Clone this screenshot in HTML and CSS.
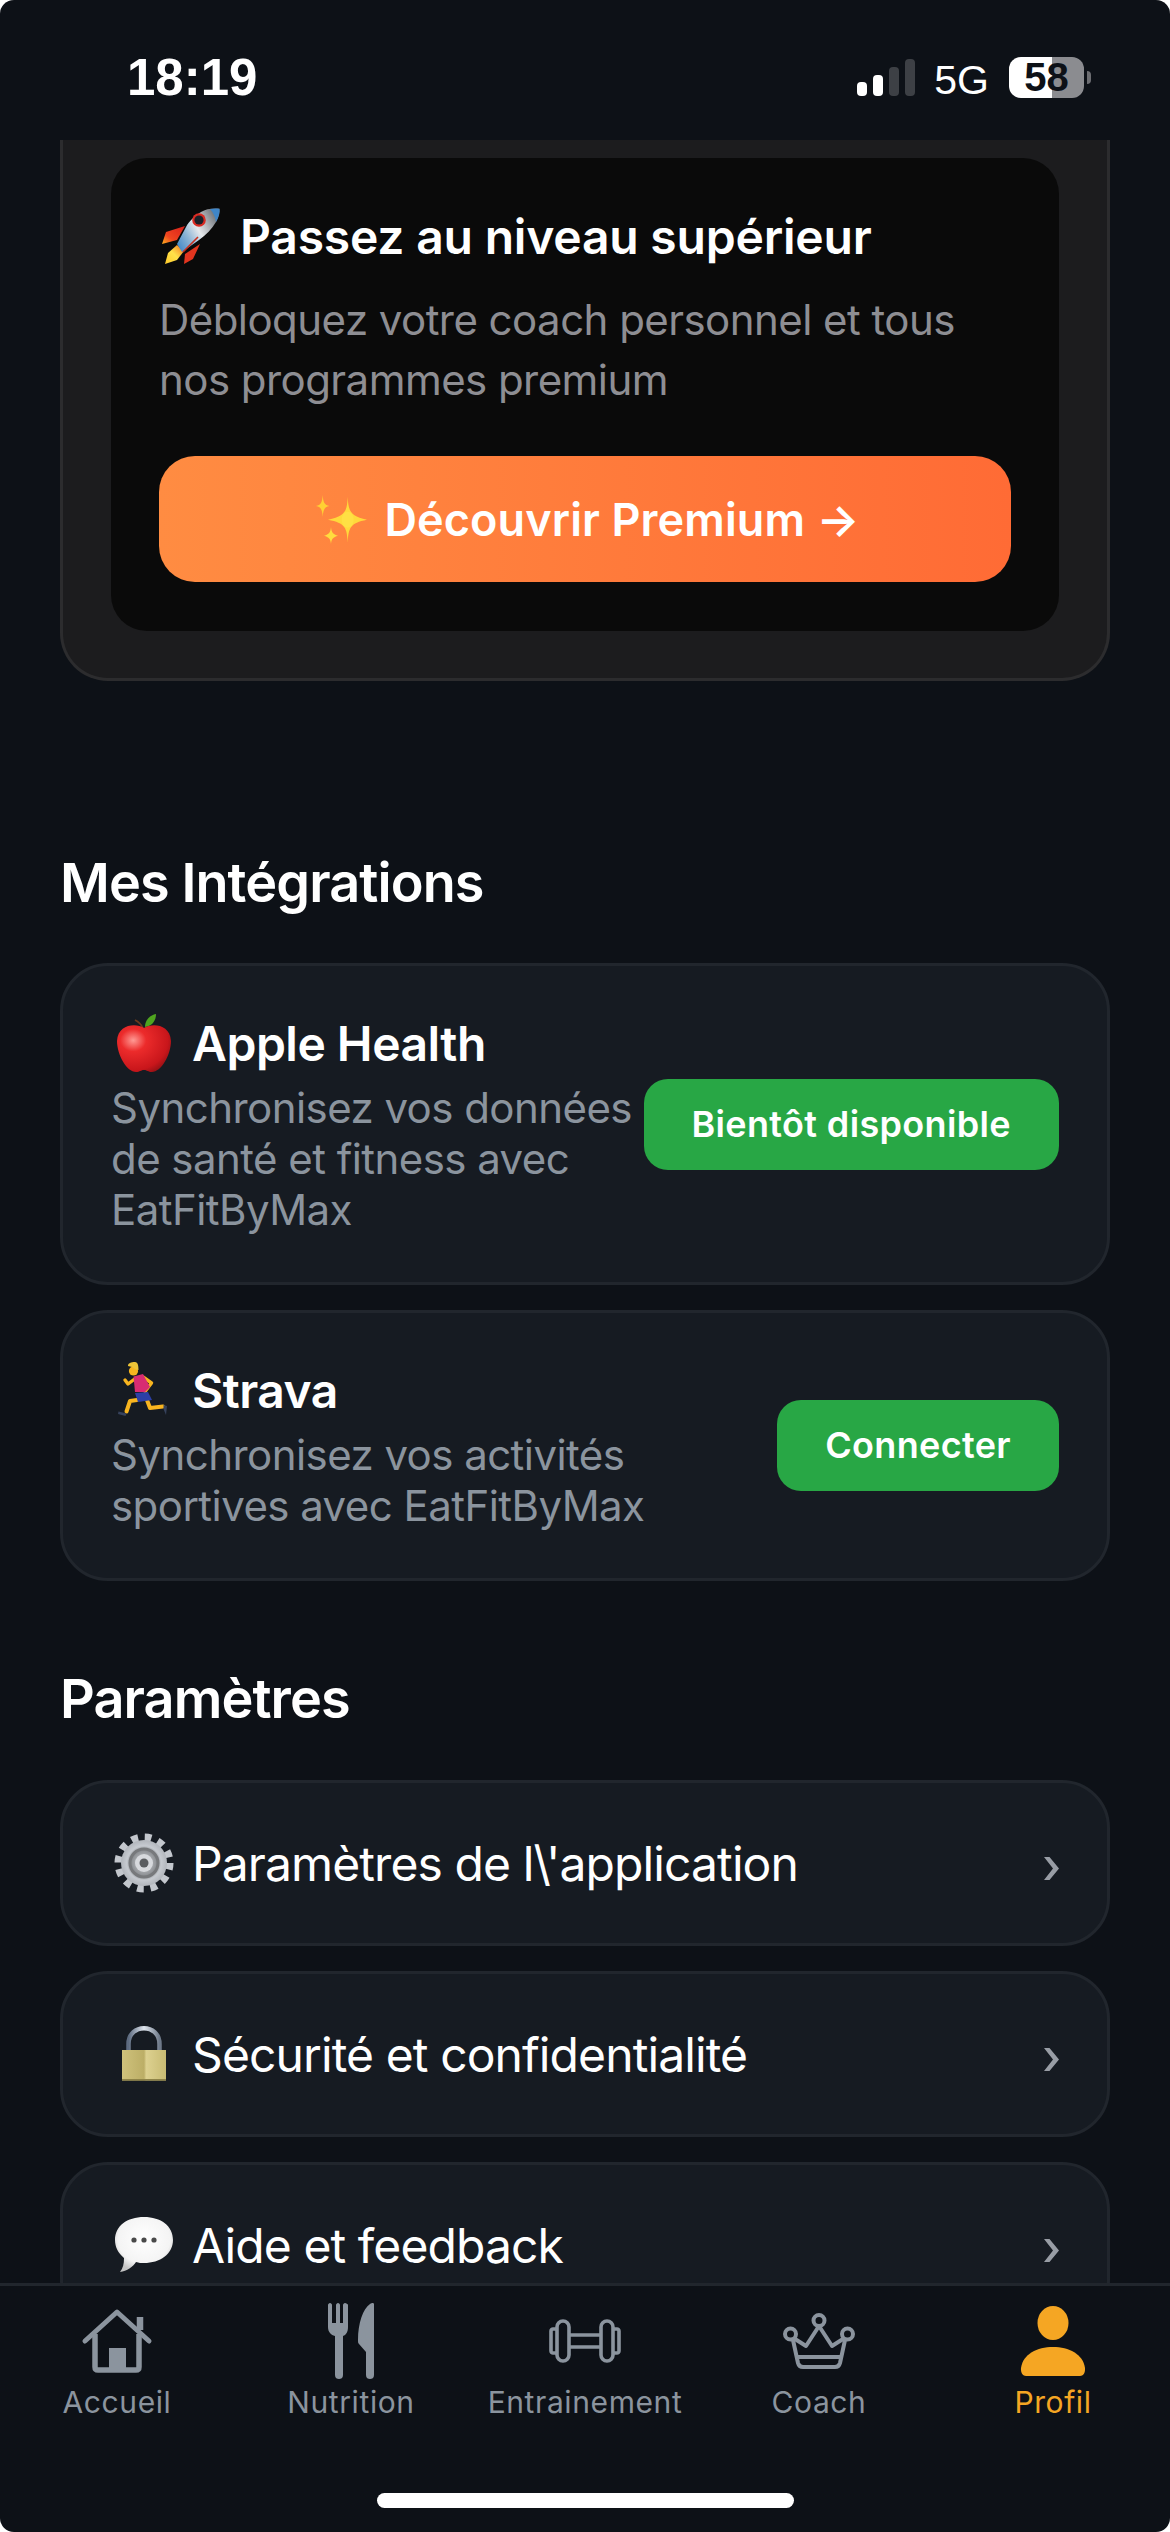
FILE: index.html
```html
<!DOCTYPE html>
<html lang="fr">
<head>
  <meta charset="UTF-8" />
  <title>Profil</title>
  <link rel="stylesheet" href="styles.css">
</head>
<body>
  <div class="phone">
    <div class="status-bar">
      <div class="time">18:19</div>
      <div class="status-right">
        <div class="signal">
          <span class="bar bar-1"></span>
          <span class="bar bar-2"></span>
          <span class="bar bar-3"></span>
          <span class="bar bar-4"></span>
        </div>
        <div class="network">5G</div>
        <div class="battery"><span class="battery-text">58</span></div>
        <div class="battery-cap"></div>
      </div>
    </div>

    <div class="content">
      <div class="premium-wrap">
        <div class="premium-card">
          <div class="premium-title">
            <svg class="emoji-rocket" viewBox="0 0 60 58">
              <defs>
                <linearGradient id="rocketBody" x1="0" y1="0.9" x2="1" y2="0.3">
                  <stop offset="0" stop-color="#3f86c8"/>
                  <stop offset="0.3" stop-color="#8fb6d6"/>
                  <stop offset="0.55" stop-color="#e6e9ec"/>
                  <stop offset="1" stop-color="#6f747a"/>
                </linearGradient>
                <linearGradient id="rocketFin" x1="1" y1="0" x2="0" y2="1">
                  <stop offset="0" stop-color="#d8201c"/>
                  <stop offset="0.65" stop-color="#f0451f"/>
                  <stop offset="1" stop-color="#ffb21e"/>
                </linearGradient>
                <linearGradient id="rocketFlame" x1="1" y1="0" x2="0" y2="1">
                  <stop offset="0" stop-color="#f26a1b"/>
                  <stop offset="0.5" stop-color="#ffe14a"/>
                  <stop offset="1" stop-color="#ffc928"/>
                </linearGradient>
              </defs>
              <path d="M23 19 L4 25 L0 37 L15 33 Z" fill="url(#rocketFin)"/>
              <path d="M38 37 L31 52 L22 57 L23 47 Z" fill="#e2351f"/>
              <path d="M15 38 L6 46 L3 57 L15 53 L22 44 Z" fill="url(#rocketFlame)"/>
              <path d="M57.500 1.700 C50 1 44 2 39 5 C33 9 27 14 24 20 L15 37 L20 45 L37 33 C44 28 50 22 54 15 C57 10 58 5 57.500 1.700 Z" fill="url(#rocketBody)"/>
              <path d="M57.500 1.700 C54 1.200 51 1.300 48 2 C51 5 53 9 54 15 C57 10 58 5 57.500 1.700 Z" fill="#3f86c8"/>
              <path d="M21 45 L36 30" fill="none" stroke="#c8301f" stroke-width="1.600"/>
              <circle cx="37" cy="13" r="6.800" fill="#d92a22"/>
              <circle cx="37" cy="13" r="4.600" fill="#1a2028"/>
            </svg>
            <span>Passez au niveau supérieur</span>
          </div>
          <div class="premium-text">Débloquez votre coach personnel et tous nos programmes premium</div>
          <div class="premium-button">
            <svg class="emoji-sparkles" viewBox="0 0 51 49">
              <path d="M31.700 2 C32.500 16 34 21 51 24.700 C34 28 32.500 33 31.700 47.700 C31 33 29.500 28 12 24.700 C29.500 21 31 16 31.700 2 Z" fill="#ffd93b"/>
              <ellipse cx="31.700" cy="24.700" rx="6" ry="8" fill="#ffe044"/>
              <path d="M6.700 0 C7.200 7.500 8.500 10 13.400 11 C8.500 12 7.200 14.500 6.700 22 C6.200 14.500 5 12 0 11 C5 10 6.200 7.500 6.700 0 Z" fill="#ffd033"/>
              <path d="M15 32 C15.500 37.500 17 39.500 22 40.700 C17 42 15.500 44 15 49 C14.500 44 13 42 8 40.700 C13 39.500 14.500 37.500 15 32 Z" fill="#ffdc3e"/>
            </svg>
            <span>Découvrir Premium →</span>
          </div>
        </div>
      </div>

      <h2 class="section-title title-integrations">Mes Intégrations</h2>

      <div class="card integration">
        <div class="integration-info">
          <div class="integration-name">
            <svg class="emoji" viewBox="0 0 60 60">
              <defs>
                <radialGradient id="appleRed" cx="0.3" cy="0.32" r="0.8">
                  <stop offset="0" stop-color="#ff9a94"/>
                  <stop offset="0.3" stop-color="#ec2b2b"/>
                  <stop offset="0.8" stop-color="#c9161b"/>
                  <stop offset="1" stop-color="#8f1014"/>
                </radialGradient>
              </defs>
              <path d="M29 15 C27 11 25 9 21 7" fill="none" stroke="#6b3a1d" stroke-width="1.600"/>
              <path d="M31 14 C31 7 36 2 42 1 C42 8 38 13 31 14 Z" fill="#4fa41f"/>
              <path d="M30 15 C38 10 56 11 57 28 C57 42 47 59 38 59 C34 59 33 57 30 57 C27 57 26 59 22 59 C13 59 3 42 3 28 C4 11 22 10 30 15 Z" fill="url(#appleRed)"/>
            </svg>
            <span>Apple Health</span>
          </div>
          <div class="integration-desc">Synchronisez vos données de santé et fitness avec EatFitByMax</div>
        </div>
        <div class="green-button">Bientôt disponible</div>
      </div>

      <div class="card integration">
        <div class="integration-info">
          <div class="integration-name">
            <svg class="emoji" viewBox="0 0 60 60">
              <path d="M22 18 L14 24 L11 20" fill="none" stroke="#f8b51f" stroke-width="3.400" stroke-linecap="round" stroke-linejoin="round"/>
              <path d="M29 17 L37.500 23 L31 31.500" fill="none" stroke="#f8b51f" stroke-width="3.400" stroke-linecap="round" stroke-linejoin="round"/>
              <path d="M23 40 L16 41 L12.500 51.500" fill="none" stroke="#f8b51f" stroke-width="4" stroke-linecap="round" stroke-linejoin="round"/>
              <path d="M33 40 L36 48 L49 46.500" fill="none" stroke="#f8b51f" stroke-width="4" stroke-linecap="round" stroke-linejoin="round"/>
              <path d="M19.500 16.500 L29 14 L36 27 L31 32 L21 32 Z" fill="#d82c72"/>
              <path d="M21 33 L34 32 L38 40 L24 42 Z" fill="#2b3fa6"/>
              <circle cx="19.500" cy="11" r="4.600" fill="#f8b51f"/>
              <path d="M14 6 C14 3 17 2 21 2 C24 2 24.500 6 24.500 10 C22 10 20 8 18 7 Z" fill="#eec537"/>
              <path d="M4.500 51.500 L12.500 53.500 L11.500 56 L4 54 Z" fill="#36425c"/>
              <path d="M49.500 45 L53 46 L52 55 L49.500 49 Z" fill="#36425c"/>
            </svg>
            <span>Strava</span>
          </div>
          <div class="integration-desc">Synchronisez vos activités sportives avec EatFitByMax</div>
        </div>
        <div class="green-button">Connecter</div>
      </div>

      <h2 class="section-title title-settings">Paramètres</h2>

      <div class="card settings-row">
        <svg class="emoji" viewBox="0 0 60 60">
          <defs>
            <radialGradient id="gearMetal" cx="0.5" cy="0.5" r="0.5">
              <stop offset="0" stop-color="#d5d8dc"/>
              <stop offset="0.55" stop-color="#8c8f93"/>
              <stop offset="0.75" stop-color="#c6cad0"/>
              <stop offset="1" stop-color="#b2b6bc"/>
            </radialGradient>
          </defs>
          <circle cx="30" cy="30" r="25" fill="none" stroke="#c3c7cd" stroke-width="9" stroke-dasharray="6.500 6.590"/>
          <circle cx="30" cy="30" r="23" fill="url(#gearMetal)"/>
          <circle cx="30" cy="30" r="14" fill="none" stroke="#77797c" stroke-width="3"/>
          <circle cx="30" cy="30" r="9" fill="#d7d9dd"/>
          <circle cx="30" cy="30" r="4.500" fill="#5b5d60"/>
        </svg>
        <span class="settings-label">Paramètres de l\'application</span>
        <svg class="chevron" viewBox="0 0 15 23">
          <path d="M0 0 L5.500 0 L15 11.500 L5.500 23 L0 23 L9 11.500 Z" fill="#989da5"/>
        </svg>
      </div>

      <div class="card settings-row">
        <svg class="emoji" viewBox="0 0 60 60">
          <defs>
            <linearGradient id="lockBody" x1="0" y1="0" x2="1" y2="0">
              <stop offset="0" stop-color="#cfc27c"/>
              <stop offset="0.5" stop-color="#bcae66"/>
              <stop offset="0.55" stop-color="#ddd190"/>
              <stop offset="1" stop-color="#c8bb73"/>
            </linearGradient>
            <linearGradient id="lockHook" x1="0" y1="0" x2="1" y2="0">
              <stop offset="0" stop-color="#5d6b80"/>
              <stop offset="0.5" stop-color="#dfe6ee"/>
              <stop offset="1" stop-color="#6f7a8a"/>
            </linearGradient>
          </defs>
          <path d="M14.500 28 L14.500 20 C14.500 -1 45.500 -1 45.500 20 L45.500 28" fill="none" stroke="url(#lockHook)" stroke-width="4.500"/>
          <path d="M8 26 L52 26 L52 56.500 L8 56.500 Z" fill="url(#lockBody)"/>
          <path d="M8 55 L52 55 L52 56.500 L8 56.500 Z" fill="#8f8448"/>
        </svg>
        <span class="settings-label">Sécurité et confidentialité</span>
        <svg class="chevron" viewBox="0 0 15 23">
          <path d="M0 0 L5.500 0 L15 11.500 L5.500 23 L0 23 L9 11.500 Z" fill="#989da5"/>
        </svg>
      </div>

      <div class="card settings-row">
        <svg class="emoji" viewBox="0 0 60 60">
          <defs>
            <radialGradient id="bubble" cx="0.5" cy="0.4" r="0.6">
              <stop offset="0" stop-color="#ffffff"/>
              <stop offset="0.75" stop-color="#f4f4f4"/>
              <stop offset="1" stop-color="#c4c4c4"/>
            </radialGradient>
          </defs>
          <path d="M30 2 C47 2 59 11 59 25 C59 39 46 48 30 48 C27 48 25 48 22 47 C19 52 13 56 6 57 C9 53 10 49 10 43 C4 38 1 32 1 25 C1 11 13 2 30 2 Z" fill="url(#bubble)"/>
          <circle cx="20" cy="25" r="2.600" fill="#4a4a4a"/>
          <circle cx="30" cy="25" r="2.600" fill="#4a4a4a"/>
          <circle cx="40" cy="25" r="2.600" fill="#4a4a4a"/>
        </svg>
        <span class="settings-label">Aide et feedback</span>
        <svg class="chevron" viewBox="0 0 15 23">
          <path d="M0 0 L5.500 0 L15 11.500 L5.500 23 L0 23 L9 11.500 Z" fill="#989da5"/>
        </svg>
      </div>
    </div>

    <div class="tab-bar">
      <div class="tab">
        <div class="tab-icon">
          <svg width="72" height="66" viewBox="0 0 72 66">
            <path d="M4 33 L36 4 L68 33" fill="none" stroke="#8b949e" stroke-width="5" stroke-linecap="round" stroke-linejoin="round"/>
            <path d="M59 22 L59 9" fill="none" stroke="#8b949e" stroke-width="6.500"/>
            <path d="M14 26 L14 59 C14 61 15 62 17 62 L55 62 C57 62 58 61 58 59 L58 26" fill="none" stroke="#8b949e" stroke-width="5.500"/>
            <rect x="28" y="40" width="17" height="22" fill="#8b949e"/>
          </svg>
        </div>
        <div class="tab-label">Accueil</div>
      </div>
      <div class="tab">
        <div class="tab-icon">
          <svg width="46" height="76" viewBox="0 0 46 76">
            <path d="M2 0 C3 0 4 1 4 2 L4 20 L8 20 L8 2 C8 1 9 0 10 0 C11 0 12 1 12 2 L12 20 L15 20 L15 2 C15 1 16 0 17 0 C18 0 20 1 20 2 L20 24 C20 29 18 32 15 33 L15 72 C15 75 13 76 11 76 C9 76 7 75 7 72 L7 33 C3 32 0 29 0 24 L0 2 C0 1 1 0 2 0 Z" fill="#8b949e"/>
            <path d="M45 0 C46 0 46 1 46 2 L46 72 C46 75 44 76 42 76 C40 76 38 75 38 72 L38 49 L31 41 C30 40 30 39 30 37 C30 20 35 6 42 1 C43 0 44 0 45 0 Z" fill="#8b949e"/>
          </svg>
        </div>
        <div class="tab-label">Nutrition</div>
      </div>
      <div class="tab">
        <div class="tab-icon">
          <svg width="72" height="44" viewBox="0 0 72 44">
            <g fill="none" stroke="#8b949e" stroke-width="3.600" stroke-linejoin="round">
              <path d="M8 10 L4 10 C3 10 2 11 2 12 L2 32 C2 33 3 34 4 34 L8 34"/>
              <rect x="8" y="2" width="12" height="40" rx="6"/>
              <path d="M20 16 L52 16 M20 28 L52 28"/>
              <rect x="52" y="2" width="12" height="40" rx="6"/>
              <path d="M64 10 L68 10 C69 10 70 11 70 12 L70 32 C70 33 69 34 68 34 L64 34"/>
            </g>
          </svg>
        </div>
        <div class="tab-label">Entrainement</div>
      </div>
      <div class="tab">
        <div class="tab-icon">
          <svg width="72" height="56" viewBox="0 0 72 56">
            <g fill="none" stroke="#8b949e" stroke-width="4" stroke-linejoin="round" stroke-linecap="round">
              <circle cx="7.500" cy="21" r="5.500"/>
              <circle cx="36" cy="7.500" r="5.500"/>
              <circle cx="64.500" cy="21" r="5.500"/>
              <path d="M10 27 L15 50 C15.500 52 17 54 20 54 L52 54 C55 54 56.500 52 57 50 L62 27"/>
              <path d="M12 26 L23 33 L36 13 L49 33 L60 26"/>
              <path d="M14 44 L58 44"/>
            </g>
          </svg>
        </div>
        <div class="tab-label">Coach</div>
      </div>
      <div class="tab tab-active">
        <div class="tab-icon">
          <svg width="66" height="70" viewBox="0 0 66 70">
            <ellipse cx="33" cy="17" rx="15.500" ry="17" fill="#f5a623"/>
            <path d="M1 62 C3 48 17 41 33 41 C49 41 63 48 65 62 C65.500 67 63 70 60 70 L6 70 C3 70 0.500 67 1 62 Z" fill="#f5a623"/>
          </svg>
        </div>
        <div class="tab-label">Profil</div>
      </div>
    </div>

    <div class="home-area">
      <div class="home-indicator"></div>
    </div>
  </div>
</body>
</html>
```

FILE: styles.css
```css
:root {
  --bg: #0d1117;
  --card: #161b22;
  --border: #21262d;
  --muted: #8b949e;
  --orange: #f5a623;
  --green: #28a745;
}

* {
  box-sizing: border-box;
}

html, body {
  margin: 0;
  background: #fff;
}

body {
  font-family: 'Inter', 'Liberation Sans', sans-serif;
  color: #fff;
}

.phone {
  width: 1170px;
  height: 2532px;
  background: var(--bg);
  border-radius: 14px;
  overflow: hidden;
  display: flex;
  flex-direction: column;
}

/* status bar */
.status-bar {
  height: 140px;
  flex-shrink: 0;
  display: flex;
  justify-content: space-between;
  align-items: flex-start;
  padding: 52px 79px 0 127px;
}

.time {
  font-family: 'Liberation Sans', sans-serif;
  font-size: 51px;
  line-height: 52px;
  font-weight: 700;
}

.status-right {
  display: flex;
  align-items: center;
  height: 44px;
  margin-top: 3px;
}

.signal {
  display: flex;
  align-items: flex-end;
  gap: 6px;
  height: 38px;
  margin-right: 19px;
}

.bar {
  width: 10px;
  border-radius: 4px;
  background: #fff;
}

.bar-1 { height: 14px; }
.bar-2 { height: 21px; }
.bar-3 { height: 29px; background: #3d4045; }
.bar-4 { height: 37px; background: #3d4045; }

.network {
  font-family: 'Liberation Sans', sans-serif;
  font-size: 41px;
  line-height: 44px;
  margin-top: 5px;
  margin-right: 20px;
}

.battery {
  width: 75px;
  height: 41px;
  border-radius: 12px;
  background: linear-gradient(90deg, #fff 0, #fff 57%, #8b8c90 57%, #8b8c90 100%);
  display: flex;
  align-items: center;
  justify-content: center;
}

.battery-text {
  font-family: 'Liberation Sans', sans-serif;
  font-size: 40px;
  font-weight: 700;
  color: #0d1117;
}

.battery-cap {
  width: 4px;
  height: 13px;
  margin-left: 3px;
  border-radius: 0 6px 6px 0;
  background: #6d6e72;
}

/* scrolling part */
.content {
  flex: 1;
  min-height: 0;
  overflow: hidden;
  padding: 0 60px;
}

.premium-wrap {
  height: 541px;
  padding: 18px 48px 0;
  background: #1c1c1e;
  border: 3px solid #2c2c2e;
  border-top: 0;
  border-radius: 0 0 48px 48px;
}

.premium-card {
  height: 473px;
  padding: 48px;
  background: #0a0a0a;
  border-radius: 36px;
}

.premium-title {
  display: flex;
  align-items: center;
  gap: 18px;
  height: 60px;
  font-size: 48px;
  font-weight: 600;
  letter-spacing: -0.2px;
}

.emoji-rocket {
  width: 60px;
  height: 58px;
  margin-left: 3px;
  flex-shrink: 0;
}

.premium-text {
  margin-top: 24px;
  font-size: 42px;
  line-height: 60px;
  letter-spacing: -0.55px;
  color: #8e8e93;
}

.premium-button {
  display: flex;
  align-items: center;
  justify-content: center;
  gap: 17px;
  height: 126px;
  margin-top: 46px;
  padding-left: 6px;
  border-radius: 36px;
  font-size: 45px;
  font-weight: 600;
  letter-spacing: 0.1px;
  background: linear-gradient(90deg, #ff8c42, #ff6b35);
}

.emoji-sparkles {
  width: 51px;
  height: 49px;
}

.section-title {
  margin: 0;
  font-size: 54px;
  line-height: 66px;
  font-weight: 600;
  letter-spacing: -0.9px;
}

.title-integrations {
  margin-top: 169px;
  margin-bottom: 47px;
}

.title-settings {
  margin-top: 85px;
  margin-bottom: 48px;
}

.card {
  background: var(--card);
  border: 3px solid var(--border);
  border-radius: 48px;
}

.integration {
  display: flex;
  align-items: center;
  padding: 47px 48px;
  margin-bottom: 25px;
}

.integration-info {
  flex: 1;
  min-width: 0;
}

.integration-name {
  display: flex;
  align-items: center;
  gap: 18px;
  height: 60px;
  font-size: 48px;
  font-weight: 600;
  letter-spacing: -0.5px;
}

.emoji {
  width: 60px;
  height: 60px;
  margin-left: 3px;
  flex-shrink: 0;
}

.integration-desc {
  margin-top: 9px;
  font-size: 42px;
  line-height: 51px;
  letter-spacing: -0.55px;
  color: var(--muted);
}

.green-button {
  flex-shrink: 0;
  padding: 0 48px;
  height: 91px;
  line-height: 91px;
  border-radius: 24px;
  background: var(--green);
  font-size: 36px;
  font-weight: 600;
  letter-spacing: 0.35px;
}

.settings-row {
  display: flex;
  align-items: center;
  height: 166px;
  padding: 0 48px;
  margin-bottom: 25px;
}

.settings-label {
  flex: 1;
  margin-left: 18px;
  font-size: 48px;
  font-weight: 400;
  letter-spacing: -0.9px;
}

.chevron {
  width: 15px;
  height: 23px;
  margin-top: 10px;
}

/* bottom tabs */
.tab-bar {
  height: 190px;
  flex-shrink: 0;
  display: flex;
  padding-top: 11px;
  background: var(--bg);
  border-top: 3px solid var(--border);
}

.tab {
  width: 234px;
  display: flex;
  flex-direction: column;
  align-items: center;
  color: var(--muted);
}

.tab-icon {
  height: 88px;
  display: flex;
  align-items: center;
  justify-content: center;
}

.tab-label {
  font-size: 30px;
  line-height: 34px;
  font-weight: 400;
  letter-spacing: 0.6px;
}

.tab-active {
  color: var(--orange);
}

.home-area {
  height: 59px;
  flex-shrink: 0;
  padding-top: 20px;
}

.home-indicator {
  width: 417px;
  height: 15px;
  margin: 0 auto;
  border-radius: 8px;
  background: #fff;
}
```
